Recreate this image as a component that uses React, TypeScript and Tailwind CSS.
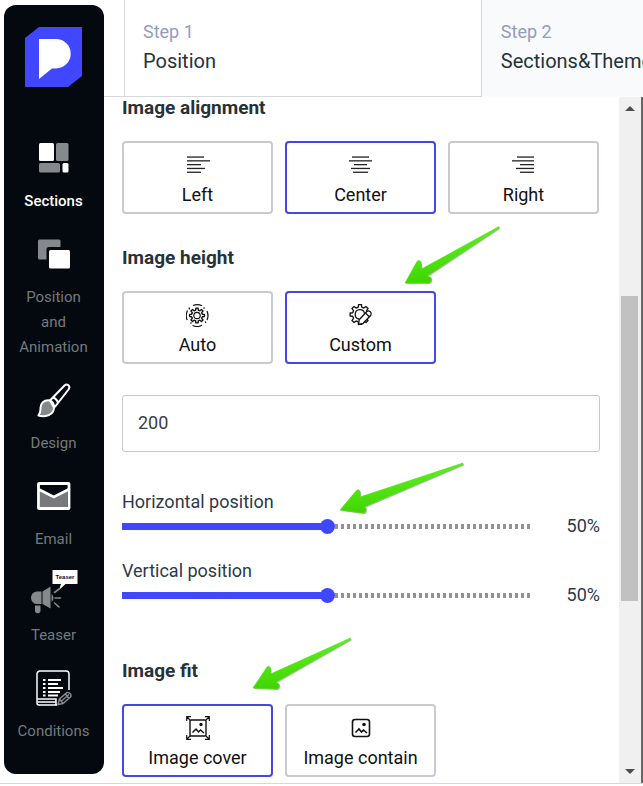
import { useState } from "react";
import type { ReactNode } from "react";
import clsx from "clsx";

// Outline of a toothed wheel centred on (cx, cy)
function gearPath(cx: number, cy: number, outer: number, inner: number, teeth = 8) {
  const points: string[] = [];
  const step = (Math.PI * 2) / teeth;
  for (let i = 0; i < teeth; i++) {
    const mid = i * step - Math.PI / 2;
    const corners: [number, number][] = [
      [inner, -0.3],
      [outer, -0.19],
      [outer, 0.19],
      [inner, 0.3],
    ];
    corners.forEach(([r, offset]) => {
      const angle = mid + offset * step;
      points.push(
        `${(cx + r * Math.cos(angle)).toFixed(2)} ${(cy + r * Math.sin(angle)).toFixed(2)}`
      );
    });
  }
  return `M${points.join("L")}Z`;
}

function Logo() {
  return (
    <svg viewBox="0 0 57 60" className="w-[57px] h-[60px]" role="img" aria-label="Logo">
      <path d="M14 0H57V49L43 60H0V11Z" fill="#4147ff" />
      <path d="M14 12H31A14.700 14.700 0 0 1 31 41.400H27L14 52Z" fill="#fff" />
    </svg>
  );
}

function SectionsIcon() {
  return (
    <svg viewBox="0 0 30 30" className="size-[30px]">
      <rect x="0" y="0" width="15" height="18" rx="1.5" fill="#fff" />
      <rect x="17" y="0" width="12.5" height="18" rx="1.5" fill="#85898c" />
      <rect x="0" y="20" width="21" height="9.5" rx="1.5" fill="#85898c" />
      <rect x="23.5" y="20" width="6" height="9.5" rx="1.5" fill="#fff" />
    </svg>
  );
}

function PositionIcon() {
  return (
    <svg viewBox="0 0 32 30" className="w-8 h-[30px]">
      <path d="M1.5 0.5H21A1.5 1.5 0 0 1 22.500 2V8H11A2.500 2.500 0 0 0 8.500 10.500V20.500H1.500A1.500 1.500 0 0 1 0 19V2A1.500 1.500 0 0 1 1.500 .5Z" fill="#85898c" />
      <rect x="11" y="11" width="21" height="18.5" rx="1.5" fill="#fff" />
    </svg>
  );
}

function BrushIcon() {
  return (
    <svg viewBox="0 0 34 36" className="w-[34px] h-9" fill="none" stroke="#fff" strokeWidth="2" strokeLinejoin="round">
      <path d="M13 18.500C7 17.500 3 21.500 3.500 27C3.500 30.500 2.500 32 1.500 33.500C8 35.500 17 33 17 25.500Z" fill="#85898c" />
      <path d="M13 18.500L27.500 3.500C30 1.200 34 4 31.500 7.500L19 23.500L17 25.500C17 22 15.500 19.500 13 18.500Z" />
      <path d="M16 15.500C18.500 16.500 20.500 18.500 21 21" />
    </svg>
  );
}

function EmailIcon() {
  return (
    <svg viewBox="0 0 34 28" className="w-[34px] h-7">
      <rect x="1.500" y="1.500" width="30.500" height="25" rx="0.500" fill="#03090f" stroke="#fff" strokeWidth="2.800" />
      <path d="M3 9L16.800 16L30.500 9V25H3Z" fill="#77797c" />
      <path d="M2 7.500L16.800 15L31.500 7.500" fill="none" stroke="#fff" strokeWidth="2.600" />
    </svg>
  );
}

function TeaserIcon() {
  return (
    <svg viewBox="0 0 48 44" className="w-12 h-11">
      <path d="M22.500 0H47.500V14H35.500L29 20L31 14H22.500Z" fill="#fff" />
      <text x="35" y="9" textAnchor="middle" fontSize="6" fontWeight="700" fill="#111" fontFamily="Liberation Sans, sans-serif">
        Teaser
      </text>
      <path d="M11.500 21.500H6.500A6.300 6.300 0 0 0 6.500 34H11.500Z" fill="#85898c" />
      <path d="M12.500 21.500L20.500 16.500V38.500L12.500 34Z" fill="#85898c" />
      <path d="M5 35.500H10.500V40.500A2.700 2.700 0 0 1 5 40.500Z" fill="#85898c" />
      <path d="M24.500 22.500L29 19M25 28H30.500M24.500 33L29 37" stroke="#85898c" strokeWidth="1.600" strokeLinecap="round" />
      <path d="M21.500 24A5 5 0 0 1 21.500 32Z" fill="#85898c" />
    </svg>
  );
}

function ConditionsIcon() {
  return (
    <svg viewBox="0 0 36 36" className="size-9" fill="none" stroke="#fff" strokeWidth="1.500">
      <path d="M33 20V4A3 3 0 0 0 30 1H4A3 3 0 0 0 1 4V33A2 2 0 0 0 3 35H21" />
      <path d="M1.500 29H20V35M1.500 32H20" />
      <path d="M12 10H25M12 14H22M12 18H27M12 22H24M12 25.500H22" strokeWidth="1.800" />
      <path d="M7 10H9.500M7 14H9.500M7 18H9.500M7 22H9.500M7 25.500H9.500" strokeWidth="2.200" />
      <path d="M22 34.500L23.500 29L31 22.500Q33 22 34.500 24Q35.500 26 34.500 27L27 33.500ZM23.500 29L27 33.500M25.500 31L33 24.500M29.500 24L33 28.500" stroke="#85898c" />
    </svg>
  );
}

const alignLines = {
  left: [[1, 18], [1, 24], [1, 15], [1, 19], [1, 15]],
  center: [[3, 20], [0, 23], [5, 18], [2, 21], [4, 19]],
  right: [[5, 22], [0, 22], [8, 22], [4, 22], [8, 22]],
};

function AlignIcon({ side }: { side: "left" | "center" | "right" }) {
  return (
    <svg viewBox="0 0 24 24" className="size-6">
      {alignLines[side].map(([x1, x2], i) => (
        <rect key={i} x={x1} y={3.400 + i * 3.800} width={x2 - x1} height={1.300} fill="#222" />
      ))}
    </svg>
  );
}

function AutoIcon() {
  return (
    <svg viewBox="0 0 24 24" className="size-6" fill="none" stroke="#111" strokeWidth="1.200" strokeLinejoin="round">
      <path d={gearPath(11, 12.500, 7.500, 5.500)} strokeWidth="1.400" />
      <circle cx="11" cy="12.500" r="3.200" />
      <path d="M7 2.500A11 11 0 0 1 16 2.800M18.500 4.500L17.500 5.500M21 8A11 11 0 0 1 21 17M16 22.300A11 11 0 0 1 6.500 22.500M4.500 20.500L5.500 19.500M1.200 17A11 11 0 0 1 1.500 7.500M3 4.500L3.500 6.500M20 20L19 18.500" />
    </svg>
  );
}

function CustomIcon() {
  return (
    <svg viewBox="0 0 24 24" className="size-6" fill="none" stroke="#111" strokeWidth="1.300" strokeLinejoin="round">
      <path d={gearPath(11, 11.500, 10, 7.500)} />
      <path d="M10 16A4.700 4.700 0 1 1 15.500 10.500" />
      <path d="M9.500 21.500L10.200 16.800L17.800 8.500Q19.300 7.200 21.300 8.800Q23 10.500 21.800 12.300L14 20.500Z" fill="#fff" />
      <path d="M16.500 10L20.500 14" />
    </svg>
  );
}

function Landscape() {
  return (
    <>
      <path d="M6.500 16.500L10 13L12.500 16L14.500 14L18 17" />
      <circle cx="15" cy="8.500" r="1" fill="#111" />
    </>
  );
}

function CoverIcon() {
  return (
    <svg viewBox="0 0 24 24" className="size-6" fill="none" stroke="#111" strokeWidth="1.400">
      <rect x="4" y="4" width="16" height="16" rx="1" />
      <Landscape />
      <path d="M4 4L1 1M20 4L23 1M4 20L1 23M20 20L23 23M.700 5V.700H5M19 .700H23.300V5M.700 19V23.300H5M19 23.300H23.300V19" strokeWidth="1.200" />
    </svg>
  );
}

function ContainIcon() {
  return (
    <svg viewBox="0 0 24 24" className="size-6" fill="none" stroke="#111" strokeWidth="1.600">
      <rect x="3.500" y="3.500" width="17" height="17" rx="2.500" />
      <Landscape />
    </svg>
  );
}

// Green pointers lying over the panel
function Pointer({ d, className, viewBox }: { d: string; className: string; viewBox: string }) {
  return (
    <svg viewBox={viewBox} className={clsx("absolute pointer-events-none", className)} aria-hidden="true">
      <defs>
        <linearGradient id="pointer" x1="0" y1="0" x2="0.300" y2="1">
          <stop offset="0.300" stopColor="#5af01c" />
          <stop offset="1" stopColor="#3fd200" />
        </linearGradient>
      </defs>
      <path d={d} transform="translate(1 1)" fill="#7c8a78" opacity="0.600" />
      <path d={d} fill="url(#pointer)" stroke="#4ce00c" strokeWidth="0.600" strokeLinejoin="round" />
    </svg>
  );
}

const menu = [
  { label: "Sections", icon: <SectionsIcon /> },
  { label: "Position and Animation", icon: <PositionIcon /> },
  { label: "Design", icon: <BrushIcon /> },
  { label: "Email", icon: <EmailIcon /> },
  { label: "Teaser", icon: <TeaserIcon /> },
  { label: "Conditions", icon: <ConditionsIcon /> },
];

function Sidebar() {
  const [active, setActive] = useState("Sections");

  return (
    <aside className="w-[100px] shrink-0 ml-1 mt-[5px] mb-[9px] pt-[22px] pb-3 pr-px rounded-xl bg-[#03090f] flex flex-col items-center">
      <Logo />
      <nav className="mt-12 w-full flex flex-col">
        {menu.map((item) => (
          <button
            key={item.label}
            onClick={() => setActive(item.label)}
            className={clsx(
              "flex flex-col items-center gap-2 px-3 pb-[17px] text-[15px] leading-[25px]",
              active === item.label ? "font-medium text-white" : "text-[#76797c]"
            )}
          >
            <span className="h-[46px] flex items-center justify-center">{item.icon}</span>
            <span>{item.label}</span>
          </button>
        ))}
      </nav>
    </aside>
  );
}

function Steps() {
  return (
    <header className="flex h-[97px]">
      <div className="w-5 shrink-0 border-b border-[#d5d9dd]" />
      <div className="flex-1 min-w-0 grid grid-cols-[minmax(0,11fr)_minmax(0,5fr)]">
        <button className="text-left pl-[18px] pb-0.5 border-l border-b border-[#d5d9dd] whitespace-nowrap">
          <span className="block text-lg leading-7 text-[#929dbd]">Step 1</span>
          <span className="block text-xl leading-[30px] text-[#263238]">Position</span>
        </button>
        <button className="text-left pl-[19px] pb-[3px] border-l border-[#d5d9dd] bg-[#f8fafc] overflow-hidden whitespace-nowrap">
          <span className="block text-lg leading-7 text-[#929dbd]">Step 2</span>
          <span className="block text-xl leading-[30px] text-[#263238]">Sections&amp;Themes</span>
        </button>
      </div>
    </header>
  );
}

type Option = { label: string; icon: ReactNode };

function OptionGroup({ title, options, initial }: { title: string; options: Option[]; initial: string }) {
  const [selected, setSelected] = useState(initial);

  return (
    <div role="group" aria-label={title}>
      <h2 className="text-[19px] leading-[22px] font-bold text-[#263238] mb-[22px]">{title}</h2>
      <div className="grid grid-cols-3 gap-3 pr-px">
        {options.map((option) => (
          <button
            key={option.label}
            aria-pressed={selected === option.label}
            onClick={() => setSelected(option.label)}
            className={clsx(
              "flex flex-col items-center gap-1.5 pt-2.5 pb-[5px] rounded border-2 bg-white text-lg leading-6 text-[#111] whitespace-nowrap",
              selected === option.label ? "border-[#4248e0]" : "border-[#c7cbd1]"
            )}
          >
            {option.icon}
            {option.label}
          </button>
        ))}
      </div>
    </div>
  );
}

function PositionSlider({ id, label }: { id: string; label: string }) {
  const [value, setValue] = useState(50);

  return (
    <div className="text-lg leading-6 text-[#2c3a4b]">
      <label htmlFor={id} className="block">
        {label}
      </label>
      <div className="flex items-center">
        <input
          id={id}
          type="range"
          value={value}
          onChange={(e) => setValue(Number(e.target.value))}
          style={{ backgroundSize: `${value}% 7px, 100% 5px` }}
          className="flex-1 min-w-0 h-6 appearance-none bg-no-repeat bg-left bg-[image:linear-gradient(#4147ff,#4147ff),repeating-linear-gradient(to_right,transparent_0_3px,#929292_3px_6px)] [&::-webkit-slider-thumb]:appearance-none [&::-webkit-slider-thumb]:size-[15px] [&::-webkit-slider-thumb]:rounded-full [&::-webkit-slider-thumb]:bg-[#4147ff]"
        />
        <output htmlFor={id} className="w-[68px] text-right">
          {value}%
        </output>
      </div>
    </div>
  );
}

function Scrollbar() {
  return (
    <div className="w-[22px] shrink-0 bg-[#f0f0f0] flex flex-col items-center text-[#4d4d4d]">
      <svg viewBox="0 0 10 5" className="w-2.5 h-[5px] mt-[9px]" fill="currentColor">
        <path d="M0 5L5 0L10 5Z" />
      </svg>
      <div className="w-full flex-1 flex flex-col pl-0.5 pr-[3px]">
        <div className="grow-[185]" />
        <div className="grow-[305] bg-[#c1c1c1]" />
        <div className="grow-[168]" />
      </div>
      <svg viewBox="0 0 10 5" className="w-2.5 h-[5px] mb-[9px]" fill="currentColor">
        <path d="M0 0L5 5L10 0Z" />
      </svg>
    </div>
  );
}

function ImageSettings() {
  const [height, setHeight] = useState("200");

  return (
    <main className="flex-1 min-w-0 pl-[18px] pr-[19px] pb-1.5">
      <OptionGroup
        title="Image alignment"
        initial="Center"
        options={[
          { label: "Left", icon: <AlignIcon side="left" /> },
          { label: "Center", icon: <AlignIcon side="center" /> },
          { label: "Right", icon: <AlignIcon side="right" /> },
        ]}
      />
      <div className="relative mt-[33px]">
        <OptionGroup
          title="Image height"
          initial="Custom"
          options={[
            { label: "Auto", icon: <AutoIcon /> },
            { label: "Custom", icon: <CustomIcon /> },
          ]}
        />
        <Pointer
          viewBox="0 0 100 62"
          className="w-[100px] h-[62px] left-[281px] -top-6"
          d="M2 60L14 38.500Q17 36 18 40L18.500 46L96 3.500L96 5L24 53L28 54.500Q29 59 26 60Z"
        />
      </div>
      <input
        type="text"
        aria-label="Custom height"
        value={height}
        onChange={(e) => setHeight(e.target.value)}
        className="block w-full h-[57px] mt-[31px] px-[15px] pb-0.5 rounded-[3px] border border-[#c5c9cd] text-lg text-[#37404a]"
      />
      <div className="relative mt-[38px]">
        <PositionSlider id="horizontal" label="Horizontal position" />
        <Pointer
          viewBox="0 0 130 56"
          className="w-[130px] h-14 left-[216px] top-[-30px]"
          d="M2 50L18 31Q21 28 22 32L22 37L125 3L125 4.500L27 46.500L28 49Q28 53 25 53Z"
        />
      </div>
      <div className="mt-[21px]">
        <PositionSlider id="vertical" label="Vertical position" />
      </div>
      <div className="relative mt-[53px]">
        <OptionGroup
          title="Image fit"
          initial="Image cover"
          options={[
            { label: "Image cover", icon: <CoverIcon /> },
            { label: "Image contain", icon: <ContainIcon /> },
          ]}
        />
        <Pointer
          viewBox="0 0 104 56"
          className="w-[104px] h-14 left-[129px] -top-6"
          d="M2 52L16 31Q19 29 19.500 33L19.500 38L99.500 2L99.500 3.500L25 46L28 48Q29 52 26 53Z"
        />
      </div>
    </main>
  );
}

function App() {
  return (
    <div className="bg-white font-[Roboto,sans-serif] overflow-hidden">
      <div className="flex border-b border-[#d5d9dd]">
        <Sidebar />
        <div className="flex-1 min-w-0 flex flex-col">
          <Steps />
          <div className="flex-1 flex border-r-2 border-[#666]">
            <ImageSettings />
            <Scrollbar />
          </div>
        </div>
      </div>
    </div>
  );
}

export default App;
